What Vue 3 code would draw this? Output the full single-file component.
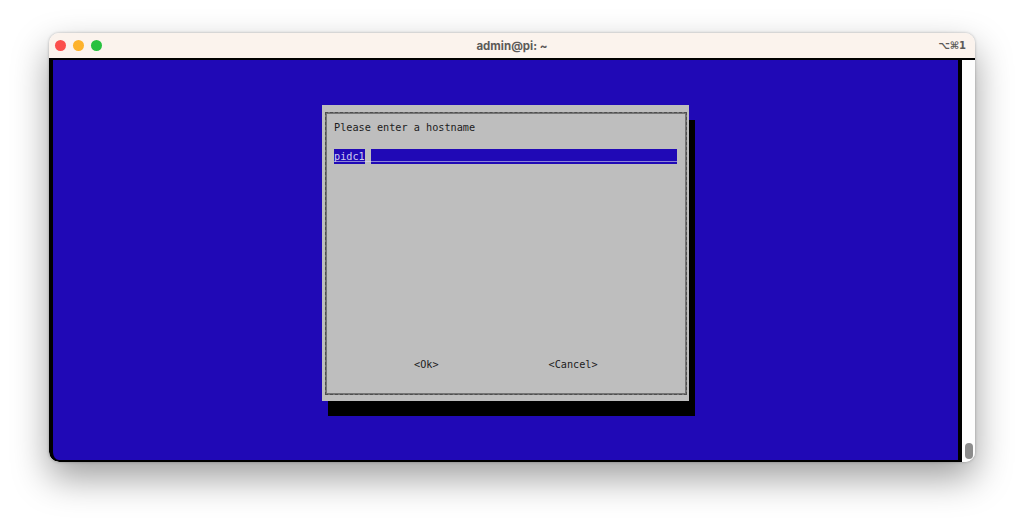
<template>
  <div class="page">
    <div class="window">
      <header class="titlebar">
        <div class="lights">
          <span class="light red"></span>
          <span class="light yellow"></span>
          <span class="light green"></span>
        </div>
        <div class="title">admin@pi: ~</div>
        <div class="shortcut">⌥⌘1</div>
      </header>
      <div class="body">
        <main class="terminal">
          <section class="dialog">
            <div class="frame">
              <p class="prompt">Please enter a hostname</p>
              <div class="field">
                <span class="value">pidc1</span>
                <span class="rest"></span>
              </div>
              <div class="buttons">
                <span>&lt;Ok&gt;</span>
                <span>&lt;Cancel&gt;</span>
              </div>
            </div>
          </section>
        </main>
        <aside class="scrollbar"><span class="thumb"></span></aside>
      </div>
    </div>
  </div>
</template>

<script setup>
</script>

<style>
html, body { margin: 0; background: #fff; overflow: hidden; }
</style>

<style scoped>
.page {
  width: 1024px;
  height: 527px;
  padding: 33px 49px 0;
  box-sizing: border-box;
  background: #fff;
  overflow: hidden;
}
.window {
  width: 926px;
  height: 429px;
  border-radius: 10px;
  overflow: hidden;
  display: flex;
  flex-direction: column;
  background: #fff;
  box-shadow: 0 16px 36px rgba(0, 0, 0, 0.38), 0 0 3px rgba(0, 0, 0, 0.28);
}
.titlebar {
  height: 25px;
  flex: none;
  background: #fbf3ed;
  display: grid;
  grid-template-columns: 1fr auto 1fr;
  align-items: center;
  font-family: "Inter", "Liberation Sans", sans-serif;
  color: #5c5a58;
}
.lights { display: flex; gap: 7px; padding-left: 6px; }
.light { width: 11px; height: 11px; border-radius: 50%; }
.red { background: #fb4f4c; }
.yellow { background: #fdb22b; }
.green { background: #27c13f; }
.title { font-size: 11.5px; font-weight: 700; }
.shortcut { justify-self: end; padding-right: 9px; font-size: 10px; font-weight: 700; font-family: "DejaVu Sans", sans-serif; }
.body {
  flex: 1;
  display: flex;
  min-height: 0;
  border-top: 2px solid #000;
}
.terminal {
  width: 913px;
  height: 402px;
  flex: none;
  box-sizing: border-box;
  border-left: 4px solid #000;
  border-right: 4px solid #000;
  border-bottom: 2px solid #000;
  border-bottom-left-radius: 10px;
  background: #2009b6;
  padding: 45px 0 0 269px;
  overflow: hidden;
}
.dialog {
  width: 367px;
  height: 296px;
  box-sizing: border-box;
  padding: 7px 2px 6px 3px;
  background: #bebebe;
  box-shadow: 6px 15px 0 #000;
}
.frame {
  height: 100%;
  box-sizing: border-box;
  border: 2px solid #747474;
  outline: 1px dashed #4e4e4e;
  outline-offset: -1px;
  padding: 6px 8px 0 7px;
  display: flex;
  flex-direction: column;
  font-family: "DejaVu Sans Mono", monospace;
  font-size: 10.2px;
  line-height: 15px;
  color: #1c1c1c;
}
.prompt { margin: 0; }
.field {
  margin-top: 14px;
  height: 15px;
  display: flex;
  background: linear-gradient(#d0cee4, #d0cee4) 0 12px / 100% 1px no-repeat;
  color: #cfcbf0;
}
.value { width: 31px; background: linear-gradient(#8d86d6, #8d86d6) 0 12px / 100% 1px no-repeat, #2009b6; }
.rest {
  margin-left: 6px;
  flex: 1;
  background: linear-gradient(#8d86d6, #8d86d6) 0 12px / 100% 1px no-repeat, #2009b6;
}
.buttons {
  margin-top: auto;
  margin-bottom: 21px;
  padding-left: 80px;
  display: flex;
  gap: 110px;
}
.scrollbar {
  flex: 1;
  background: #fdfdfd;
  display: flex;
  justify-content: center;
  align-items: flex-end;
  padding: 0 0 3px 1px;
}
.thumb { width: 8px; height: 16px; border-radius: 4px; background: #8c8c8c; }
</style>
